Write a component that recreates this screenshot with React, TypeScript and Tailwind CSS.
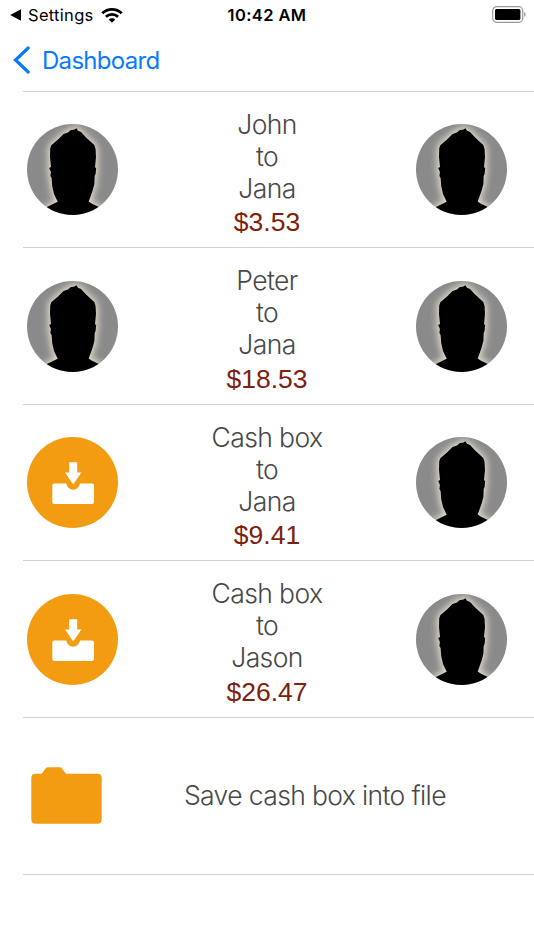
import React from 'react';

interface Transfer {
  id: number;
  from: string;
  to: string;
  amount: string;
  cashBox?: boolean;
}

const transfers: Transfer[] = [
  { id: 1, from: 'John', to: 'Jana', amount: '$3.53' },
  { id: 2, from: 'Peter', to: 'Jana', amount: '$18.53' },
  { id: 3, from: 'Cash box', to: 'Jana', amount: '$9.41', cashBox: true },
  { id: 4, from: 'Cash box', to: 'Jason', amount: '$26.47', cashBox: true },
];

const HEAD =
  'M41 8.4L43.5 6.2L47.5 5.6L49.4 4.2L51 6.8L54 8L59.4 13.8L67.3 21L68.6 25L69 33L68 43.4L69.2 43.8L68.6 50L67.7 52L67.4 60L65.5 67L61.7 77.4L65 79.8L73 83.5L73 95H19V83.5L26 80L30.7 77.8L27 70L25.2 62L24.6 54L23.4 52L23.9 48L22.2 44L24 43L23 33L23.2 24.5L24.3 21.2L31 15.5L36.5 10Z';

function Avatar() {
  return (
    <svg viewBox="0 0 91 91" className="size-[91px] shrink-0 rounded-full bg-[#8a8a8a]">
      <defs>
        <filter id="glow" x="-40%" y="-40%" width="180%" height="180%">
          <feGaussianBlur stdDeviation="3.6" />
        </filter>
      </defs>
      <path d={HEAD} fill="#e6dfd0" stroke="#e6dfd0" strokeWidth="4" filter="url(#glow)" />
      <path d={HEAD} fill="#000" />
    </svg>
  );
}

function CashBoxIcon() {
  return (
    <svg viewBox="0 0 91 91" className="size-[91px] shrink-0 rounded-full bg-[#f39c12]">
      <path d="M42.2 25.3H50.2V35.4H54.4L46.2 47.4L38 35.4H42.2Z" fill="#fff" />
      <path
        d="M27.3 46.5H39.2C40.2 50.3 42.7 52.7 46.1 52.7S52 50.3 53 46.5H65Q67 46.5 67 48.5V65Q67 67 65 67H27.3Q25.3 67 25.3 65V48.5Q25.3 46.5 27.3 46.5Z"
        fill="#fff"
      />
    </svg>
  );
}

function StatusBar() {
  return (
    <div className="grid h-[30px] grid-cols-3 items-center pr-[7px] pl-[10px] text-black">
      <div className="flex items-center">
        <svg viewBox="0 0 11 12" className="h-3 w-[11px]">
          <path d="M0.2 6L11 0.2V11.8Z" fill="currentColor" />
        </svg>
        <span className="ml-[7px] text-[16.5px] leading-[30px] tracking-[0.3px]">Settings</span>
        <svg viewBox="0 0 22 16" className="ml-[7px] h-4 w-[22px]">
          <g fill="none" stroke="currentColor" strokeWidth="2.7">
            <path d="M1.3 6.2A14 14 0 0 1 20.7 6.2" />
            <path d="M4.9 9.8A9 9 0 0 1 17.1 9.8" />
          </g>
          <path d="M11 15.7L7.7 12.5A4.7 4.7 0 0 1 14.3 12.5Z" fill="currentColor" />
        </svg>
      </div>
      <span className="-ml-[3px] text-center text-[16.5px] leading-[30px] font-semibold tracking-[0.4px]">
        10:42 AM
      </span>
      <svg viewBox="0 0 35 17" className="-mt-[2px] h-[17px] w-[35px] justify-self-end">
        <rect x="0.7" y="0.7" width="30" height="15.6" rx="4" fill="none" stroke="#999" strokeWidth="1.2" />
        <rect x="3" y="3" width="25.4" height="11" rx="1.5" fill="#000" />
        <path d="M32.6 6.6Q34 8.4 32.6 10.4Z" fill="#999" stroke="#999" strokeWidth="0.8" />
      </svg>
    </div>
  );
}

export default function App() {
  return (
    <div className="h-[950px] w-[534px] overflow-hidden bg-white font-['Inter',sans-serif]">
      <StatusBar />

      {/* Navigation */}
      <nav className="flex h-[60.6px] items-center pl-[13px] text-[#087aff]">
        <svg viewBox="0 0 17 28" className="h-7 w-[17px]">
          <path d="M15.2 2L2.5 14L15.2 26" fill="none" stroke="currentColor" strokeWidth="3.2" strokeLinecap="round" />
        </svg>
        <span className="ml-3 pt-px text-[24px] tracking-[-0.7px]">Dashboard</span>
      </nav>

      {/* Transfers */}
      <ul className="ml-[23px] border-t border-[#d2d2d2]">
        {transfers.map((t) => (
          <li
            key={t.id}
            className="flex h-[156.6px] justify-between border-b border-[#d2d2d2] pt-[32.4px] pr-[27px] pl-1"
          >
            {t.cashBox ? <CashBoxIcon /> : <Avatar />}
            <div className="-mt-[16.4px] text-center text-[26.5px] leading-8 font-light tracking-[-0.6px] text-[#484848]">
              <p>{t.from}</p>
              <p>to</p>
              <p>{t.to}</p>
              <p className="mt-[2.4px] font-['Liberation_Sans',sans-serif] font-normal tracking-normal text-[#7e200b]">
                {t.amount}
              </p>
            </div>
            <Avatar />
          </li>
        ))}
        <li className="flex h-[156.6px] items-center border-b border-[#d2d2d2] pl-2">
          <svg viewBox="0 0 71 57" className="h-[57px] w-[71px]">
            <path
              d="M4.5 6.7H10.5L14.5 1.5Q15.5 0.3 17 0.3H28.5Q30 0.3 31 1.5L35 6.7H66.5Q70.7 6.7 70.7 11V52.5Q70.7 56.7 66.5 56.7H4.5Q0.3 56.7 0.3 52.5V11Q0.3 6.7 4.5 6.7Z"
              fill="#f39c12"
            />
          </svg>
          <span className="ml-[82px] text-[26.5px] font-light tracking-[-0.63px] whitespace-nowrap text-[#484848]">
            Save cash box into file
          </span>
        </li>
      </ul>
    </div>
  );
}
